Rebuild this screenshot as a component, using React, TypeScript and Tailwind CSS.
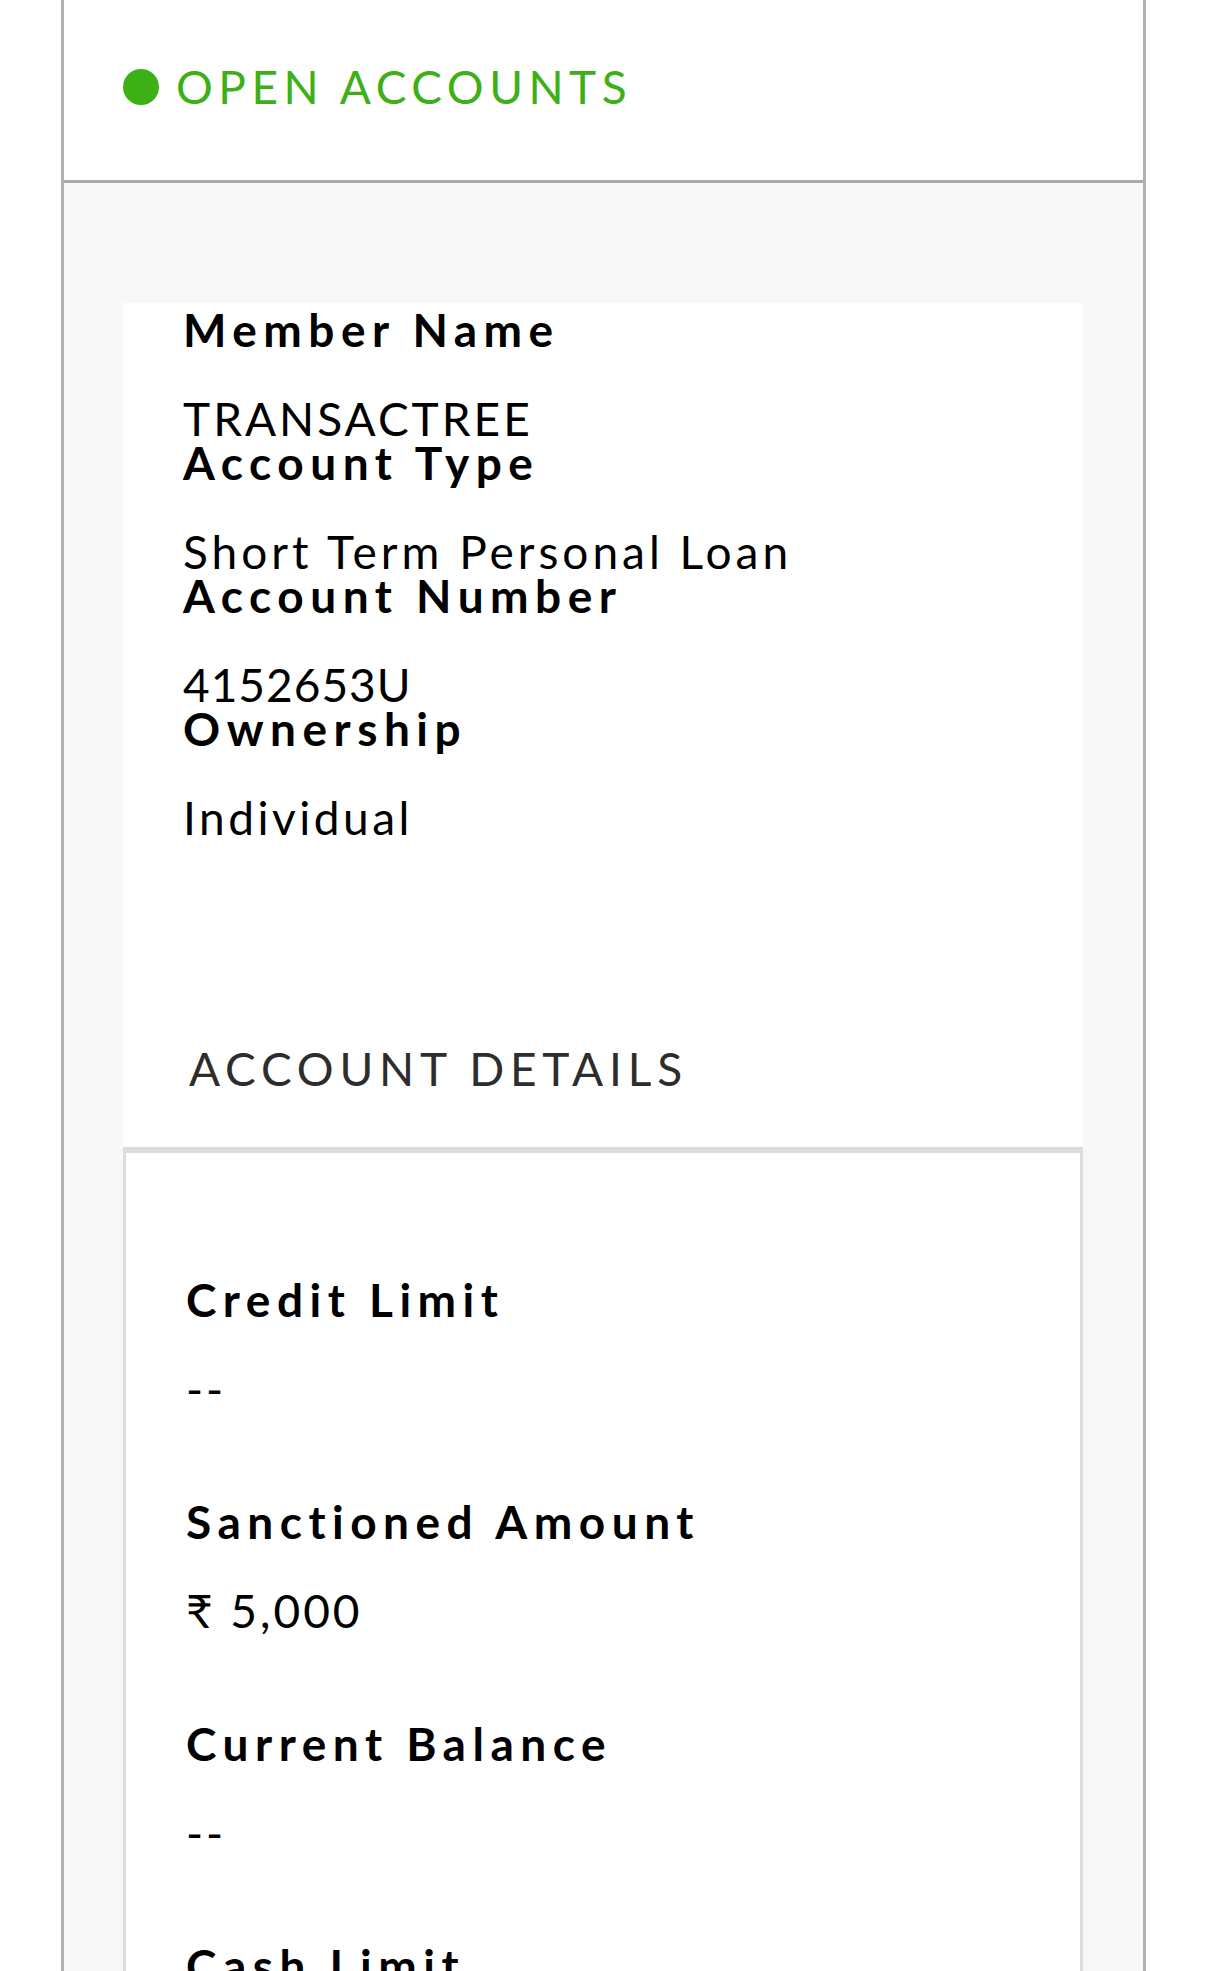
const mainFields = [
  { label: "Member Name", value: "TRANSACTREE", track: "tracking-[3px]" },
  { label: "Account Type", value: "Short Term Personal Loan", track: "tracking-[4px]" },
  { label: "Account Number", value: "4152653U", track: "tracking-[1px]" },
  { label: "Ownership", value: "Individual", track: "tracking-[3.5px]" },
];

const detailFields = [
  { label: "Credit Limit", value: "--" },
  { label: "Sanctioned Amount", value: "₹ 5,000" },
  { label: "Current Balance", value: "--" },
  { label: "Cash Limit", value: "--" },
  { label: "Amount Overdue", value: "--" },
];

export default function App() {
  return (
    <main className="min-h-screen bg-white font-['Lato','Noto_Sans',sans-serif] text-black">
      <div className="ml-[61px] w-[1085px] border-x-[3px] border-[#b0b0b0]">
        {/* Header */}
        <div className="h-[183px] border-b-[3px] border-[#aaaaaa] bg-white pt-[65px] pl-[59px]">
          <div className="flex items-center gap-[17px]">
            <span className="h-[36px] w-[36px] rounded-full bg-[#3cb014]" />
            <span className="text-[46px] leading-[44px] tracking-[5.5px] text-[#3cb014]">OPEN ACCOUNTS</span>
          </div>
        </div>

        {/* Body */}
        <div className="bg-[#f8f8f8] pt-[120px] pl-[59px] pr-[60px]">
          <div className="bg-white pt-[5px]">
            <div className="pl-[60px]">
              {mainFields.map((f) => (
                <div key={f.label}>
                  <div className="mb-[45px] text-[46px] font-bold leading-[44px] tracking-[6.5px]">{f.label}</div>
                  <div className={`text-[46px] leading-[44px] ${f.track}`}>{f.value}</div>
                </div>
              ))}
            </div>

            <div className="mt-[207px] pb-[56px] pl-[66px] text-[46px] leading-[44px] tracking-[5.8px] text-[#2d2d2d]">
              ACCOUNT DETAILS
            </div>

            <div className="border-[3px] border-t-[6px] border-[#dcdcdc] pt-[125px] pl-[60px]">
              {detailFields.map((f) => (
                <div key={f.label} className="mb-[89px]">
                  <div className="mb-[45px] text-[46px] font-bold leading-[44px] tracking-[6.5px]">{f.label}</div>
                  <div className="text-[46px] leading-[44px] tracking-[3px]">{f.value}</div>
                </div>
              ))}
            </div>
          </div>
        </div>
      </div>
    </main>
  );
}
